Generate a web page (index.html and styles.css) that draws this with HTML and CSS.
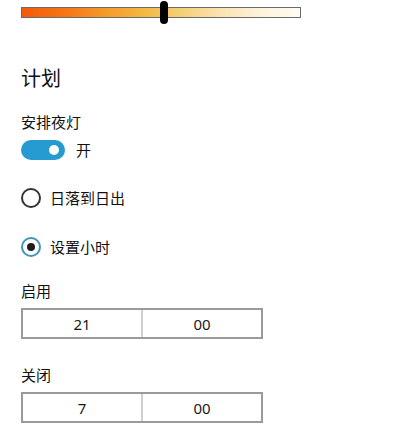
FILE: index.html
```html
<!DOCTYPE html>
<html lang="zh-CN">
<head>
<meta charset="utf-8">
<link rel="stylesheet" href="styles.css">
</head>
<body>
<div class="page">
  <div class="slider">
    <div class="track"></div>
    <div class="thumb"></div>
  </div>

  <h2 class="heading">计划</h2>

  <div class="label label-schedule">安排夜灯</div>
  <div class="toggle-row">
    <span class="toggle"><span class="knob"></span></span>
    <span class="toggle-text">开</span>
  </div>

  <div class="radio-row radio-first">
    <span class="radio"></span>
    <span class="radio-text">日落到日出</span>
  </div>
  <div class="radio-row radio-second">
    <span class="radio checked"><span class="dot"></span></span>
    <span class="radio-text">设置小时</span>
  </div>

  <div class="label label-time">启用</div>
  <div class="timebox">
    <div class="cell">21</div>
    <div class="cell">00</div>
  </div>

  <div class="label label-time">关闭</div>
  <div class="timebox">
    <div class="cell">7</div>
    <div class="cell">00</div>
  </div>
</div>
</body>
</html>
```

FILE: styles.css
```css
html, body {
  margin: 0;
  padding: 0;
  background: #ffffff;
}

body {
  font-family: "Noto Sans", "Noto Sans CJK SC", sans-serif;
  color: #111111;
}

.page {
  padding: 1px 0 0 21px;
}

.slider {
  position: relative;
  width: 280px;
  height: 23px;
}

.track {
  position: relative;
  top: 6px;
  height: 11px;
  box-sizing: border-box;
  border: 1px solid #6b6b6b;
  background: linear-gradient(to right, #f25a0a 0%, #f67414 15%, #f49a2a 30%, #f2bb45 45%, #f5d07a 58%, #fae3b4 72%, #fdf3dc 86%, #fffbf3 100%);
}

.thumb {
  position: absolute;
  left: 139px;
  top: 0;
  width: 8px;
  height: 23px;
  border-radius: 4px;
  background: #000000;
}

.heading {
  margin: 41px 0 0 0;
  font-size: 20px;
  line-height: 28px;
  font-weight: 400;
  color: #111111;
}

.label {
  font-size: 15px;
  line-height: 20px;
  color: #111111;
}

.label-schedule {
  margin-top: 19px;
}

.toggle-row {
  display: flex;
  align-items: center;
  gap: 11px;
  margin-top: 8px;
  height: 20px;
}

.toggle {
  display: flex;
  align-items: center;
  justify-content: flex-end;
  box-sizing: border-box;
  width: 44px;
  height: 20px;
  border-radius: 10px;
  background: #259bd1;
  padding-right: 6px;
}

.knob {
  width: 10px;
  height: 10px;
  border-radius: 50%;
  background: #ffffff;
}

.toggle-text {
  font-size: 15px;
  line-height: 20px;
}

.radio-row {
  display: flex;
  align-items: center;
  gap: 9px;
  height: 20px;
}

.radio-first {
  margin-top: 28px;
}

.radio-second {
  margin-top: 29px;
}

.radio {
  display: flex;
  align-items: center;
  justify-content: center;
  box-sizing: border-box;
  width: 20px;
  height: 20px;
  border-radius: 50%;
  border: 2px solid #333333;
}

.radio.checked {
  border-color: #3f95ba;
}

.dot {
  width: 8px;
  height: 8px;
  border-radius: 50%;
  background: #1e1e1e;
}

.radio-text {
  font-size: 15px;
  line-height: 20px;
}

.label-time {
  margin-top: 24px;
}

.timebox + .label-time {
  margin-top: 26px;
}

.timebox {
  display: flex;
  box-sizing: border-box;
  width: 242px;
  height: 31px;
  margin-top: 7px;
  border: 2px solid #9a9a9a;
}

.cell {
  flex: 1;
  display: flex;
  align-items: center;
  justify-content: center;
  font-size: 15px;
  color: #1a1a1a;
}

.cell + .cell {
  border-left: 2px solid #cfcfcf;
}
```
